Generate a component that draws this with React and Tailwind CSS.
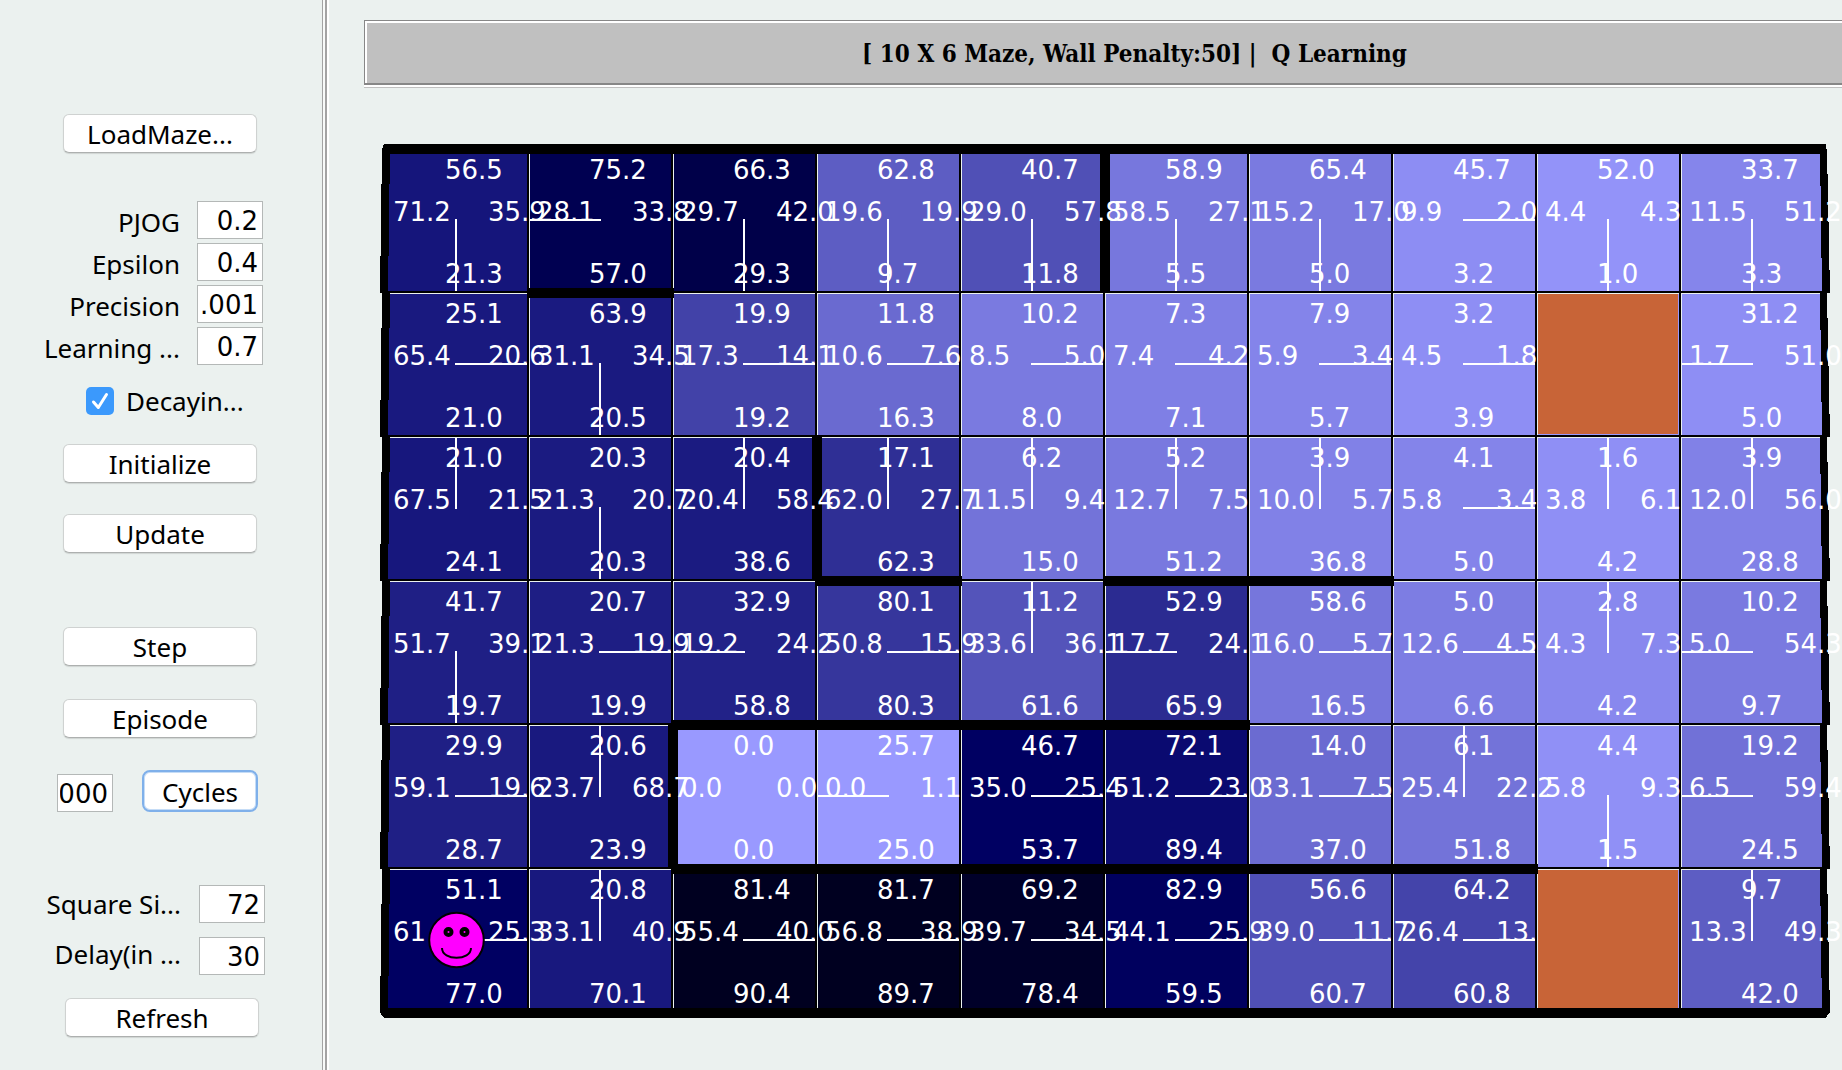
import React, { useState } from "react";

/* Each cell: [up, left, right, down, policy direction, optional cost override] */
const G = "goal";
const ROWS = [
  [
    ["56.5", "71.2", "35.9", "21.3", "D"],
    ["75.2", "28.1", "33.8", "57.0", "L"],
    ["66.3", "29.7", "42.0", "29.3", "D"],
    ["62.8", "19.6", "19.9", "9.7", "D"],
    ["40.7", "29.0", "57.8", "11.8", "D"],
    ["58.9", "58.5", "27.1", "5.5", "D"],
    ["65.4", "15.2", "17.0", "5.0", "D"],
    ["45.7", "9.9", "2.0", "3.2", "R"],
    ["52.0", "4.4", "4.3", "1.0", "D"],
    ["33.7", "11.5", "51.2", "3.3", "D"],
  ],
  [
    ["25.1", "65.4", "20.6", "21.0", "R"],
    ["63.9", "31.1", "34.5", "20.5", "D"],
    ["19.9", "17.3", "14.1", "19.2", "R"],
    ["11.8", "10.6", "7.6", "16.3", "R"],
    ["10.2", "8.5", "5.0", "8.0", "R"],
    ["7.3", "7.4", "4.2", "7.1", "R"],
    ["7.9", "5.9", "3.4", "5.7", "R"],
    ["3.2", "4.5", "1.8", "3.9", "R"],
    G,
    ["31.2", "1.7", "51.0", "5.0", "L"],
  ],
  [
    ["21.0", "67.5", "21.5", "24.1", "U"],
    ["20.3", "21.3", "20.7", "20.3", "D"],
    ["20.4", "20.4", "58.4", "38.6", "U"],
    ["17.1", "62.0", "27.7", "62.3", "U"],
    ["6.2", "11.5", "9.4", "15.0", "U"],
    ["5.2", "12.7", "7.5", "51.2", "U"],
    ["3.9", "10.0", "5.7", "36.8", "U"],
    ["4.1", "5.8", "3.4", "5.0", "R"],
    ["1.6", "3.8", "6.1", "4.2", "U"],
    ["3.9", "12.0", "56.0", "28.8", "U"],
  ],
  [
    ["41.7", "51.7", "39.1", "19.7", "D"],
    ["20.7", "21.3", "19.9", "19.9", "R"],
    ["32.9", "19.2", "24.2", "58.8", "L"],
    ["80.1", "50.8", "15.9", "80.3", "R"],
    ["11.2", "33.6", "36.1", "61.6", "U"],
    ["52.9", "17.7", "24.1", "65.9", "L"],
    ["58.6", "16.0", "5.7", "16.5", "R"],
    ["5.0", "12.6", "4.5", "6.6", "R"],
    ["2.8", "4.3", "7.3", "4.2", "U"],
    ["10.2", "5.0", "54.3", "9.7", "L"],
  ],
  [
    ["29.9", "59.1", "19.6", "28.7", "R"],
    ["20.6", "23.7", "68.7", "23.9", "U"],
    ["0.0", "0.0", "0.0", "0.0", ""],
    ["25.7", "0.0", "1.1", "25.0", "L"],
    ["46.7", "35.0", "25.4", "53.7", "R"],
    ["72.1", "51.2", "23.0", "89.4", "R"],
    ["14.0", "33.1", "7.5", "37.0", "R"],
    ["6.1", "25.4", "22.2", "51.8", "U"],
    ["4.4", "5.8", "9.3", "1.5", "D"],
    ["19.2", "6.5", "59.4", "24.5", "L"],
  ],
  [
    ["51.1", "61", "25.3", "77.0", "R"],
    ["20.8", "33.1", "40.9", "70.1", "U"],
    ["81.4", "55.4", "40.0", "90.4", "R"],
    ["81.7", "56.8", "38.9", "89.7", "R"],
    ["69.2", "39.7", "34.5", "78.4", "R"],
    ["82.9", "44.1", "25.9", "59.5", "R"],
    ["56.6", "39.0", "11.7", "60.7", "R"],
    ["64.2", "26.4", "13.", "60.8", "R", 13.7],
    G,
    ["9.7", "13.3", "49.3", "42.0", "U"],
  ],
];

const CELLS = ROWS.flat();
const SIZE = 144;

function shade(cell) {
  if (cell === G) return "rgb(153 153 255)";
  const cost = cell[5] ?? Math.min(...cell.slice(0, 4).map(Number));
  const base = Math.max(0, Math.round(153 - 6.2 * cost));
  const blue = Math.max(32, Math.round(255 - 6.2 * cost));
  return `rgb(${base} ${base} ${blue})`;
}

const ARROWS = {
  U: [70, 0, 2, 72],
  D: [70, 70, 2, 74],
  L: [0, 70, 72, 2],
  R: [70, 70, 74, 2],
};

/* Interior walls in cell units: horizontal [col, row, length], vertical [col, row] */
const H_WALLS = [
  [0, 0, 10],
  [0, 6, 10],
  [1, 1, 1],
  [3, 3, 1],
  [5, 3, 2],
  [2, 4, 4],
  [2, 5, 6],
];
const V_WALLS = [
  [5, 0],
  [3, 2],
  [2, 4],
];

function MazeLines() {
  const rows = [0, 1, 2, 3, 4, 5];
  return (
    <svg
      className="pointer-events-none overflow-visible [grid-area:1/1]"
      width="1440"
      height="864"
      viewBox="0 0 1440 864"
      shapeRendering="crispEdges"
      aria-hidden="true"
    >
      {CELLS.map((c, i) => {
        if (c === G || !c[4]) return null;
        const [x, y, w, h] = ARROWS[c[4]];
        return (
          <rect
            key={i}
            x={(i % 10) * SIZE + x}
            y={Math.floor(i / 10) * SIZE + y}
            width={w}
            height={h}
            fill="#fff"
          />
        );
      })}
      {[1, 2, 3, 4, 5].map((r) => (
        <rect key={r} x="0" y={r * SIZE} width="1440" height="1" fill="#ebf1ef" />
      ))}
      {[1, 2, 3, 4, 5, 6, 7, 8, 9].map((c) => (
        <g key={c}>
          <rect x={c * SIZE} y="0" width="1" height="864" fill="#ebf1ef" />
          <rect x={c * SIZE - 2} y="0" width="2" height="864" fill="#000" />
        </g>
      ))}
      {[1, 2, 3, 4, 5].map((r) => (
        <rect key={r} x="0" y={r * SIZE - 2} width="1440" height="2" fill="#000" />
      ))}
      {H_WALLS.map(([c, r, n], i) => (
        <rect
          key={i}
          x={c * SIZE - (c ? 1 : 0)}
          y={r * SIZE - 5}
          width={n * SIZE + (c ? 2 : 0)}
          height="10"
          fill="#000"
        />
      ))}
      {V_WALLS.map(([c, r], i) => (
        <rect key={i} x={c * SIZE - 5} y={r * SIZE} width="10" height={SIZE} fill="#000" />
      ))}
      {rows.map((r) => {
        const y = r * SIZE;
        return (
          <g key={r} fill="#000">
            <polygon points={`-3,${y} 5,${y} 3,${y + 144} -5,${y + 144}`} />
            <polygon points={`1435,${y} 1442,${y} 1445,${y + 144} 1437,${y + 144}`} />
          </g>
        );
      })}
      <polygon points="-1,-5 5,-5 5,6 -3,6 -3,0" />
      <polygon points="1435,-5 1441,-5 1442,6 1435,6" />
      <polygon points="-1,869 8,869 8,859 -4,859 -4,865" />
      <polygon points="1432,869 1441,869 1444,864 1444,859 1432,859" />
    </svg>
  );
}

function Agent() {
  return (
    <svg
      className="absolute left-[43px] top-[42px] size-[58px]"
      viewBox="0 0 58 58"
      role="img"
      aria-label="Agent"
    >
      <circle cx="28.5" cy="29" r="27.3" fill="#f0f" stroke="#000" strokeWidth="2" />
      <circle cx="20.5" cy="21" r="3" fill="#f0f" stroke="#000" strokeWidth="4" />
      <circle cx="36.5" cy="21" r="3" fill="#f0f" stroke="#000" strokeWidth="4" />
      <path d="M14 37 C14 50 43 50 43 37" fill="none" stroke="#000" strokeWidth="2" />
    </svg>
  );
}

function Cell({ cell, agent }) {
  if (cell === G) {
    return (
      <div className="pb-[3px] pl-px pr-[3px] pt-px">
        <div className="h-full bg-[#c86437]" />
      </div>
    );
  }
  const [up, left, right, down] = cell;
  return (
    <div className="relative flex flex-col whitespace-nowrap pt-[6px]">
      <span className="pl-[60px]">{up}</span>
      <div className="mt-3 flex pl-2">
        <span className="w-[95px] shrink-0">{left}</span>
        <span>{right}</span>
      </div>
      <span className="mt-8 pl-[60px]">{down}</span>
      {agent && <Agent />}
    </div>
  );
}

function Maze() {
  return (
    <div className="ml-[21px] mt-[61px] grid w-[1440px] font-['DejaVu_Sans',sans-serif] text-[26px] leading-[30px] text-white">
      <div className="grid auto-rows-[144px] grid-cols-10 [grid-area:1/1]">
        {CELLS.map((c, i) => (
          <div key={i} style={{ backgroundColor: shade(c) }} />
        ))}
      </div>
      <div className="grid auto-rows-[144px] grid-cols-[repeat(10,144px)] [grid-area:1/1]">
        {CELLS.map((c, i) => (
          <Cell key={i} cell={c} agent={i === 50} />
        ))}
      </div>
      <MazeLines />
    </div>
  );
}

function Button({ children, className = "ml-[63px]" }) {
  return (
    <button
      type="button"
      className={`h-[39px] w-[194px] shrink-0 rounded-md border border-[#cfd2d1] border-b-[#adb0af] bg-white pt-[2px] leading-[35px] shadow-[0_1px_1px_rgba(0,0,0,0.12)] ${className}`}
    >
      {children}
    </button>
  );
}

function Field({ id, initial, className = "w-[66px]", ...rest }) {
  const [value, setValue] = useState(initial);
  return (
    <input
      id={id}
      type="text"
      dir="rtl"
      value={value}
      onChange={(e) => setValue(e.target.value)}
      className={`h-[38px] shrink-0 border border-[#b4b8b7] bg-white pl-[2px] pr-1 pt-[2px] font-['DejaVu_Sans',sans-serif] leading-[34px] outline-none ${className}`}
      {...rest}
    />
  );
}

function LabeledField({ id, label, initial, leading = "leading-[42px]", fieldClass }) {
  return (
    <>
      <label htmlFor={id} className={`whitespace-nowrap text-right ${leading}`}>
        {label}
      </label>
      <Field id={id} initial={initial} className={fieldClass} />
    </>
  );
}

function Sidebar() {
  const [decay, setDecay] = useState(true);
  return (
    <aside className="flex w-[322px] shrink-0 flex-col pt-[114px]">
      <Button>LoadMaze...</Button>

      <div className="mt-12 grid auto-rows-[38px] grid-cols-[180px_66px] gap-x-[17px] gap-y-1">
        <LabeledField id="pjog" label="PJOG" initial="0.2" />
        <LabeledField id="epsilon" label="Epsilon" initial="0.4" />
        <LabeledField id="precision" label="Precision" initial="0.001" />
        <LabeledField id="learning" label="Learning ..." initial="0.7" />
      </div>

      <label className="ml-[86px] mt-[17px] flex h-[38px] items-center gap-3">
        <span className="grid">
          <input
            type="checkbox"
            checked={decay}
            onChange={(e) => setDecay(e.target.checked)}
            className="size-7 appearance-none rounded-[5px] bg-white checked:bg-[#3b99fc] [grid-area:1/1]"
          />
          {decay && (
            <svg className="pointer-events-none size-7 [grid-area:1/1]" viewBox="0 0 28 28" aria-hidden="true">
              <path
                d="M7.500 15 L12.300 20.500 L20.500 7.500"
                fill="none"
                stroke="#fff"
                strokeWidth="3"
                strokeLinecap="round"
                strokeLinejoin="round"
              />
            </svg>
          )}
        </span>
        Decayin...
      </label>

      <div className="mt-[24px] flex flex-col gap-[31px]">
        <Button>Initialize</Button>
        <Button>Update</Button>
      </div>

      <div className="mt-[74px] flex flex-col gap-[33px]">
        <Button>Step</Button>
        <Button>Episode</Button>
      </div>

      <div className="ml-[57px] mt-8 flex items-end gap-[29px]">
        <Field id="cycles" initial="000" className="w-14" aria-label="Cycles" />
        <button
          type="button"
          className="h-[42px] w-[116px] rounded-lg border-2 border-[#7fb0ea] bg-white pt-[2px] leading-[36px] shadow-[inset_0_0_0_1px_#c5dcf6]"
        >
          Cycles
        </button>
      </div>

      <div className="mt-[73px] grid auto-rows-[38px] grid-cols-[181px_66px] gap-x-[18px] gap-y-[14px]">
        <LabeledField id="square" label="Square Si..." initial="72" leading="leading-[38px]" fieldClass="w-[66px] pt-1" />
        <LabeledField id="delay" label="Delay(in ..." initial="30" leading="leading-[34px]" fieldClass="w-[66px] pt-1" />
      </div>

      <Button className="ml-[65px] mt-[23px]">Refresh</Button>
    </aside>
  );
}

export default function App() {
  return (
    <div className="flex min-h-screen overflow-hidden bg-[#ebf1ef] font-['Noto_Sans','DejaVu_Sans',sans-serif] text-[26px] text-black">
      <Sidebar />
      <div className="flex w-[7px] shrink-0" role="separator">
        <div className="w-px bg-[#a3a3a3]" />
        <div className="w-[2px] bg-[#f8faf9]" />
        <div className="w-[2px] bg-[#a3a3a3]" />
        <div className="w-[2px] bg-white" />
      </div>
      <main className="min-w-0 flex-1 pl-[35px] pt-5">
        <header className="-mr-16 border-b border-[#c0c0c0] bg-white pb-[2px]">
          <div className="border-b-2 border-l border-t border-[#878787] bg-white pl-[2px] pt-[2px]">
            <h1 className="whitespace-pre bg-[#c0c0c0] pr-1 pt-[2px] text-center font-['DejaVu_Serif_Condensed','DejaVu_Serif',serif] text-[24px] font-bold leading-[58px]">
              {"[ 10 X 6 Maze, Wall Penalty:50] |  Q Learning"}
            </h1>
          </div>
        </header>
        <Maze />
      </main>
    </div>
  );
}
